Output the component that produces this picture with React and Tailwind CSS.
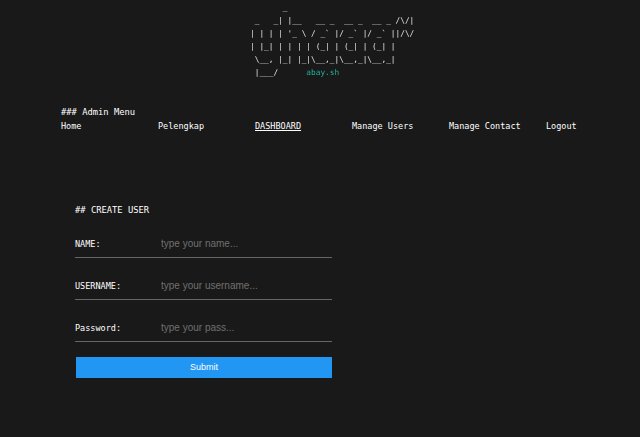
const art = [
"       _",
" _   _| |__   __ _  __ _  __ _ /\\/|",
"| | | | '_ \\ / _` |/ _` |/ _` ||/\\/",
"| |_| | | | | (_| | (_| | (_| |",
" \\__, |_| |_|\\__,_|\\__,_|\\__,_|",
];
const mono = "font-['DejaVu_Sans_Mono',monospace]";
const nav = ["Home", "Pelengkap", "DASHBOARD", "Manage Users", "Manage Contact", "Logout"];
const fields = [
  ["NAME:", "type your name..."],
  ["USERNAME:", "type your username..."],
  ["Password:", "type your pass..."],
];
export default function App() {
  return (
    <div className={`min-h-[437px] w-[640px] overflow-hidden bg-[#191919] text-white ${mono}`}>
      <pre className={`pt-[1px] pl-[250px] text-[7.8px] leading-[13px] text-[#e4e4e4] h-[105px] [will-change:transform] ${mono}`}>
        {art.join("\n")}
        {"\n |___/      "}
        <span className="text-[#22b09a]">{"abay.sh"}</span>
      </pre>
      <div className="pl-[61px]">
        <h3 className="text-[8.8px] leading-[14px]">### Admin Menu</h3>
        <nav className="flex text-[8.5px] leading-[14px]">
          {nav.map((n) => (
            <a key={n} className={`w-[97px] shrink-0 ${n === "DASHBOARD" ? "underline" : ""}`}>{n}</a>
          ))}
        </nav>
      </div>
      <form className="ml-[75px] mt-[70px] w-[257px]">
        <h4 className="text-[8.8px] leading-[14px] mb-[13px]">## CREATE USER</h4>
        {fields.map(([l, p]) => (
          <label key={l} className="flex items-center h-[28px] mb-[14px] last-of-type:mb-[15px] border-b border-[#666] text-[8.5px]">
            <span className="w-[86px] shrink-0 pt-[2px]">{l}</span>
            <input
              placeholder={p}
              className="flex-1 min-w-0 bg-transparent outline-none font-['Liberation_Sans',sans-serif] text-[10px] placeholder:text-[#707070]"
            />
          </label>
        ))}
        <button type="button" className="block ml-[1px] w-[256px] h-[21px] bg-[#2196f3] text-white text-[9px] font-['Liberation_Sans',sans-serif]">Submit</button>
      </form>
    </div>
  );
}
